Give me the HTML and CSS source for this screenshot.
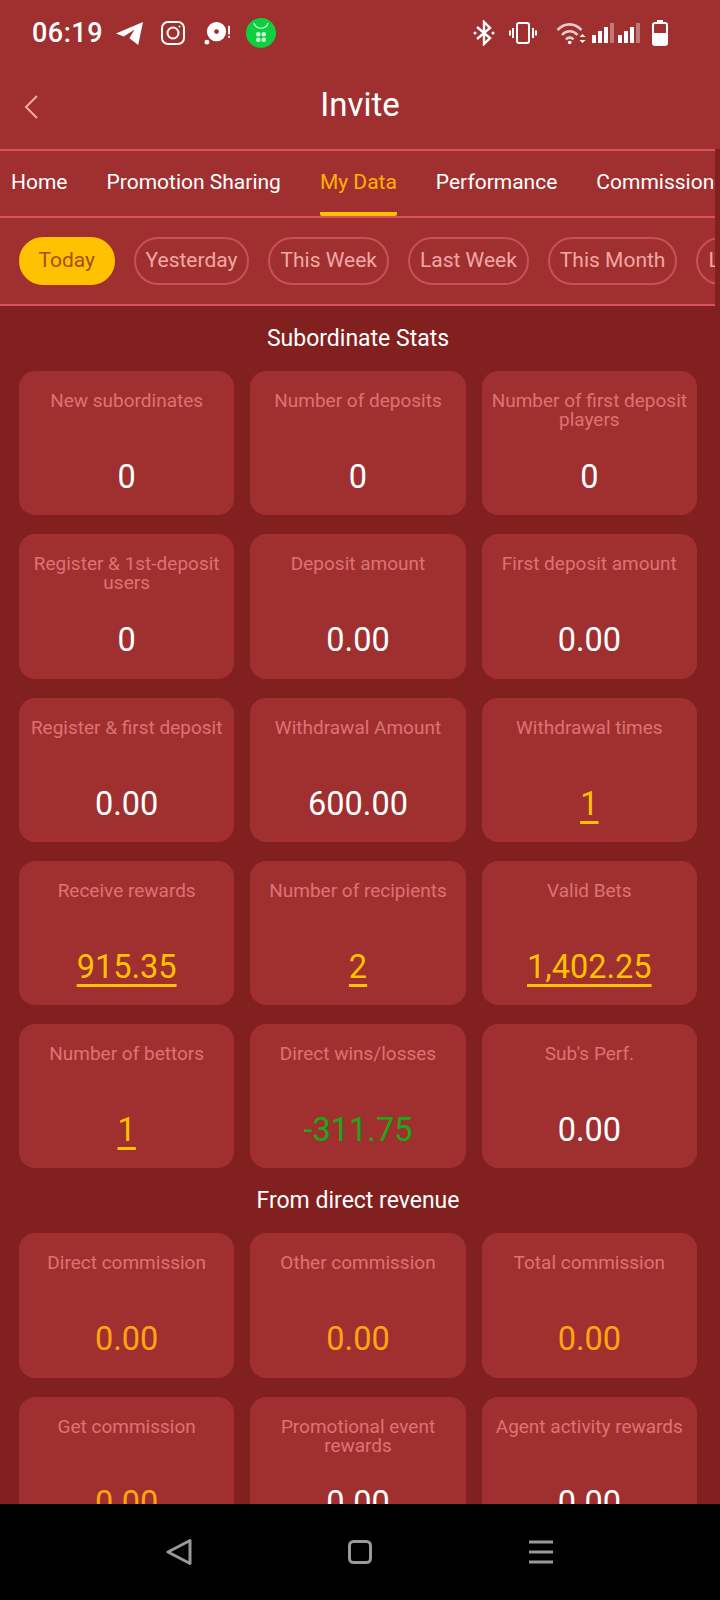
FILE: index.html
```html
<!DOCTYPE html>
<html lang="en">
<head>
<meta charset="UTF-8" />
<meta name="viewport" content="width=device-width, initial-scale=1" />
<title>Invite</title>
<link rel="stylesheet" href="styles.css">
</head>
<body>
<div class="screen">
  <div class="app">
    <header class="top">
      <div class="status">
        <span class="clock">06:19</span>
        <svg class="st st-tg" viewBox="0 0 30 28"><path d="M1 14 29 2 24 26 15 19 20 10 9 17Z" fill="#fff"/></svg>
        <svg class="st st-ig" viewBox="0 0 26 26" fill="none" stroke="#fff" stroke-width="2"><rect x="2" y="2" width="22" height="22" rx="6"/><circle cx="13" cy="13" r="5.5"/><circle cx="19.5" cy="6.5" r="1" fill="#fff" stroke="none"/></svg>
        <svg class="st st-disc" viewBox="0 0 28 26"><circle cx="13" cy="11" r="10" fill="#fff"/><circle cx="13" cy="11" r="2.5" fill="#a03030"/><circle cx="3" cy="22" r="2.5" fill="#fff"/><rect x="25" y="5" width="2" height="9" fill="#fff"/><rect x="25" y="15.500" width="2" height="2" fill="#fff"/></svg>
        <svg class="st st-shop" viewBox="0 0 30 30"><circle cx="15" cy="15" r="15" fill="#0dcf3f"/><path d="M8 5c2 7 12 7 14 0" fill="none" stroke="#c9f5d4" stroke-width="1.200"/><g fill="#c9f5d4"><rect x="10" y="14" width="4.500" height="4.500" rx="2"/><rect x="15.500" y="14" width="4.500" height="4.500" rx="2"/><rect x="10" y="19.500" width="4.500" height="4.500" rx="2"/><rect x="15.500" y="19.500" width="4.500" height="4.500" rx="2"/></g></svg>
        <span class="st-gap"></span>
        <svg class="st st-bt" viewBox="0 0 22 26" fill="none" stroke="#fff" stroke-width="2.400"><path d="M4 7 17 18 11 24V2L17 8 4 19"/><circle cx="2" cy="13" r="1.500" fill="#fff" stroke="none"/><circle cx="20" cy="13" r="1.500" fill="#fff" stroke="none"/></svg>
        <svg class="st st-vib" viewBox="0 0 28 22" fill="none" stroke="#fff" stroke-width="2"><rect x="8" y="1" width="12" height="20" rx="2"/><path d="M4 6v10M1 8.500v5M24 6v10M27 8.500v5"/></svg>
        <svg class="st st-wifi" viewBox="0 0 30 24" fill="none" stroke="#fff" stroke-width="2.600" stroke-opacity=".75"><path d="M1.500 9c7-7.500 17-7.500 24 0"/><path d="M6 14c4.500-5 11-5 15.500 0"/><path d="M10 18.500c2-2.500 5.500-2.500 7.500 0"/><circle cx="13.700" cy="21.500" r="1.800" fill="#fff" stroke="none"/><path d="M23.500 16h6L26.500 13ZM23.500 19h6L26.500 22Z" fill="#fff" stroke="none"/></svg>
        <svg class="st st-sig" viewBox="0 0 48 20" fill="#fff"><rect x="0" y="12" width="4" height="8"/><rect x="6" y="8" width="4" height="12"/><rect x="12" y="4" width="4" height="16"/><rect x="18" y="0" width="4" height="20" opacity=".35"/><rect x="26" y="12" width="4" height="8"/><rect x="32" y="8" width="4" height="12"/><rect x="38" y="4" width="4" height="16"/><rect x="44" y="0" width="4" height="20" opacity=".35"/></svg>
        <svg class="st st-bat" viewBox="0 0 16 26"><rect x="5" y="0" width="6" height="3" fill="#fff"/><rect x="1" y="3" width="14" height="22" rx="2" fill="none" stroke="#fff" stroke-width="2"/><rect x="1" y="13" width="14" height="12" rx="1" fill="#fff"/></svg>
      </div>
      <div class="titlebar">
        <svg class="back" viewBox="0 0 16 26" fill="none" stroke="#f5a9a0" stroke-width="2"><path d="M14 2 3 13l11 11"/></svg>
        <h1>Invite</h1>
      </div>
    </header>

    <div class="strips">
      <nav class="tabs">
        <a>Home</a>
        <a>Promotion Sharing</a>
        <a class="active">My Data</a>
        <a>Performance</a>
        <a>Commission</a>
      </nav>
      <div class="chips">
        <span class="chip on">Today</span>
        <span class="chip">Yesterday</span>
        <span class="chip">This Week</span>
        <span class="chip">Last Week</span>
        <span class="chip">This Month</span>
        <span class="chip">Last Month</span>
      </div>
    </div>

    <main class="content">
      <h2>Subordinate Stats</h2>
      <div class="grid">
        <div class="card"><p>New subordinates</p><b>0</b></div>
        <div class="card"><p>Number of deposits</p><b>0</b></div>
        <div class="card"><p>Number of first deposit players</p><b>0</b></div>
        <div class="card"><p>Register &amp; 1st-deposit users</p><b>0</b></div>
        <div class="card"><p>Deposit amount</p><b>0.00</b></div>
        <div class="card"><p>First deposit amount</p><b>0.00</b></div>
        <div class="card"><p>Register &amp; first deposit</p><b>0.00</b></div>
        <div class="card"><p>Withdrawal Amount</p><b>600.00</b></div>
        <div class="card"><p>Withdrawal times</p><b class="link">1</b></div>
        <div class="card"><p>Receive rewards</p><b class="link">915.35</b></div>
        <div class="card"><p>Number of recipients</p><b class="link">2</b></div>
        <div class="card"><p>Valid Bets</p><b class="link">1,402.25</b></div>
        <div class="card"><p>Number of bettors</p><b class="link">1</b></div>
        <div class="card"><p>Direct wins/losses</p><b class="loss">-311.75</b></div>
        <div class="card"><p>Sub's Perf.</p><b>0.00</b></div>
      </div>
      <h2>From direct revenue</h2>
      <div class="grid">
        <div class="card"><p>Direct commission</p><b class="gold">0.00</b></div>
        <div class="card"><p>Other commission</p><b class="gold">0.00</b></div>
        <div class="card"><p>Total commission</p><b class="gold">0.00</b></div>
        <div class="card"><p>Get commission</p><b class="gold">0.00</b></div>
        <div class="card"><p>Promotional event rewards</p><b>0.00</b></div>
        <div class="card"><p>Agent activity rewards</p><b>0.00</b></div>
      </div>
    </main>
  </div>

  <footer class="navbar">
    <svg viewBox="0 0 26 28" fill="none" stroke="#999" stroke-width="3" stroke-linejoin="round"><path d="M24 2.500V25.500L2 14Z"/></svg>
    <svg viewBox="0 0 26 28" fill="none" stroke="#999" stroke-width="3"><rect x="2.500" y="3.500" width="21" height="21" rx="4"/></svg>
    <svg viewBox="0 0 26 28" fill="#999"><rect x="1" y="2.500" width="24" height="3"/><rect x="1" y="12.500" width="24" height="3"/><rect x="1" y="22.500" width="24" height="3"/></svg>
  </footer>
</div>
</body>
</html>
```

FILE: styles.css
```css
* { box-sizing: border-box; }
html, body { margin: 0; padding: 0; }
body { font-family: Roboto, "Liberation Sans", sans-serif; background: #000; }
h1, h2, p { margin: 0; font-weight: 400; }

.screen {
  width: 720px;
  height: 1600px;
  display: flex;
  flex-direction: column;
  overflow: hidden;
}
.app {
  height: 1504px;
  overflow: hidden;
  background: #82201f;
}

.top { background: #a03030; height: 149px; }
.status {
  height: 66px;
  padding: 0 0 0 32px;
  display: flex;
  align-items: center;
  color: #fff;
}
.clock { font-size: 27px; font-weight: 500; letter-spacing: .5px; width: 71px; }
.st { display: block; flex: none; }
.st-tg { width: 29px; height: 27px; margin-left: 12px; }
.st-ig { width: 26px; height: 26px; margin-left: 16px; }
.st-disc { width: 27px; height: 25px; margin-left: 18px; }
.st-shop { width: 30px; height: 30px; margin-left: 15px; }
.st-gap { width: 197px; flex: none; }
.st-bt { width: 22px; height: 26px; }
.st-vib { width: 28px; height: 22px; margin-left: 14px; }
.st-wifi { width: 30px; height: 24px; margin-left: 19px; }
.st-sig { width: 48px; height: 20px; margin-left: 6px; }
.st-bat { width: 16px; height: 26px; margin-left: 12px; }

.titlebar {
  height: 83px;
  padding-bottom: 6px;
  display: flex;
  align-items: center;
  justify-content: center;
  position: relative;
}
.titlebar h1 { color: #fff; font-size: 33px; }
.back { position: absolute; left: 23px; top: 28px; width: 16px; height: 26px; }

.strips {
  width: 715px;
  background: #a03030;
  border-top: 2px solid #d9515a;
  border-bottom: 2px solid #d9515a;
}
.tabs {
  height: 67px;
  display: flex;
  gap: 39px;
  padding-left: 11px;
  overflow: hidden;
  border-bottom: 2px solid #d9515a;
  white-space: nowrap;
}
.tabs a {
  flex: none;
  height: 65px;
  line-height: 62px;
  font-size: 21px;
  color: #fff;
}
.tabs a.active { color: #ffb000; border-bottom: 4px solid #ffc200; border-radius: 0 0 2px 2px; }

.chips {
  height: 86px;
  display: flex;
  align-items: center;
  gap: 19px;
  padding-left: 19px;
  overflow: hidden;
}
.chip {
  flex: none;
  height: 48px;
  line-height: 43px;
  padding: 0 10px;
  border: 2px solid #c9505a;
  border-radius: 24px;
  font-size: 21px;
  color: #f2a7a5;
}
.chip.on {
  padding: 0 17.500px;
  background: #ffc200;
  border-color: #ffc200;
  color: #a4501a;
}

.content { padding: 0 23px 0 19px; }
.content h2 {
  height: 65px;
  line-height: 66px;
  text-align: center;
  font-size: 23px;
  color: #fff;
}
.grid {
  display: grid;
  grid-template-columns: repeat(3, 1fr);
  column-gap: 16px;
  row-gap: 19px;
}
.card {
  height: 144.25px;
  padding: 20px 6px 0;
  border-radius: 16px;
  background: #a03030;
  display: flex;
  flex-direction: column;
  align-items: center;
  text-align: center;
}
.card p {
  height: 64px;
  font-size: 19px;
  line-height: 19px;
  color: #dc7373;
}
.card b {
  font-weight: 400;
  font-size: 32.500px;
  line-height: 44px;
  color: #fff;
}
.card b.link { color: #ffc200; text-decoration: underline; text-decoration-thickness: 3px; text-underline-offset: 6px; }
.card b.gold { color: #ffa510; }
.card b.loss { color: #17ab17; }

.navbar {
  height: 96px;
  background: #000;
  display: flex;
  align-items: center;
  justify-content: center;
  gap: 155px;
}
.navbar svg { width: 26px; height: 28px; display: block; }
```
